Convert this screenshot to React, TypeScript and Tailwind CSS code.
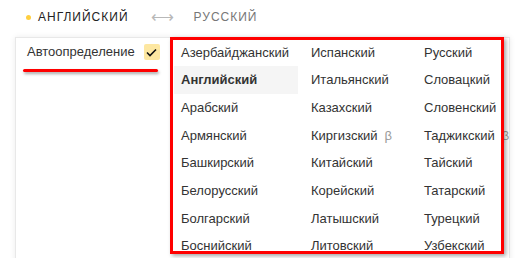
const cols: { name: string; bold?: boolean; beta?: boolean }[][] = [
  [
    { name: "Азербайджанский" },
    { name: "Английский", bold: true },
    { name: "Арабский" },
    { name: "Армянский" },
    { name: "Башкирский" },
    { name: "Белорусский" },
    { name: "Болгарский" },
    { name: "Боснийский" },
  ],
  [
    { name: "Испанский" },
    { name: "Итальянский" },
    { name: "Казахский" },
    { name: "Киргизский", beta: true },
    { name: "Китайский" },
    { name: "Корейский" },
    { name: "Латышский" },
    { name: "Литовский" },
  ],
  [
    { name: "Русский" },
    { name: "Словацкий" },
    { name: "Словенский" },
    { name: "Таджикский", beta: true },
    { name: "Тайский" },
    { name: "Татарский" },
    { name: "Турецкий" },
    { name: "Узбекский" },
  ],
];

function Column({ items, width }: { items: typeof cols[0]; width: string }) {
  return (
    <div className={`flex flex-col shrink-0 ${width}`}>
      {items.map((it) => (
        <div
          key={it.name}
          className={`h-[27.7px] shrink-0 flex items-center pl-[7px] whitespace-nowrap ${
            it.bold ? "font-bold bg-[#f5f5f5] mr-[6px]" : ""
          }`}
        >
          {it.name}
          {it.beta && <span className="ml-[7px] text-[#9a9a9a]">β</span>}
        </div>
      ))}
    </div>
  );
}

export default function App() {
  return (
    <div className="w-[519px] h-[258px] overflow-hidden bg-white font-['Liberation_Sans',Arial,sans-serif] text-[13px] text-[#333]">
      <div className="h-[37px] flex items-center pl-[26px] pb-[3px] text-[12px] tracking-[1px]">
        <span className="w-[5px] h-[5px] rounded-full bg-[#ffcf40] mr-[7px]" />
        <span className="text-[#222]">АНГЛИЙСКИЙ</span>
        <span className="ml-[22px] mr-[20px] text-[#b8b8b8] text-[16px] tracking-normal">⟷</span>
        <span className="text-[#777]">РУССКИЙ</span>
      </div>
      <div className="ml-[15px] w-[495px] h-[240px] border border-[#e8e8e8] shadow-[0_0_6px_rgba(0,0,0,0.08)] flex">
        <div className="relative w-[154px] shrink-0 pl-[11px] pt-[6px]">
          <div className="flex items-center h-[16px]">
            <span className="text-[#333]">Автоопределение</span>
            <span className="ml-[9px] w-[16px] h-[16px] rounded-[2px] bg-[#fde7a1] flex items-center justify-center">
              <svg width="11" height="9" viewBox="0 0 11 9">
                <path d="M1 4.5 L4 7.5 L10 1.5" fill="none" stroke="#111" strokeWidth="1.6" />
              </svg>
            </span>
          </div>
          <div className="absolute left-[7px] top-[31px] w-[135px] h-[3px] bg-[#ff0000] rounded-full shadow-[1px_2px_3px_rgba(0,0,0,0.35)]" />
        </div>
        <div className="relative flex-1 min-w-0">
          <div className="h-[214px] overflow-hidden flex pl-[4px] pt-[0.5px]">
            <Column items={cols[0]} width="w-[130px]" />
            <Column items={cols[1]} width="w-[113px]" />
            <Column items={cols[2]} width="w-[90px]" />
          </div>
          <div className="absolute left-0 top-[-1px] w-[334px] h-[217px] border-[3px] border-[#ff0000] shadow-[2px_2px_4px_rgba(0,0,0,0.35)]" />
        </div>
      </div>
    </div>
  );
}
